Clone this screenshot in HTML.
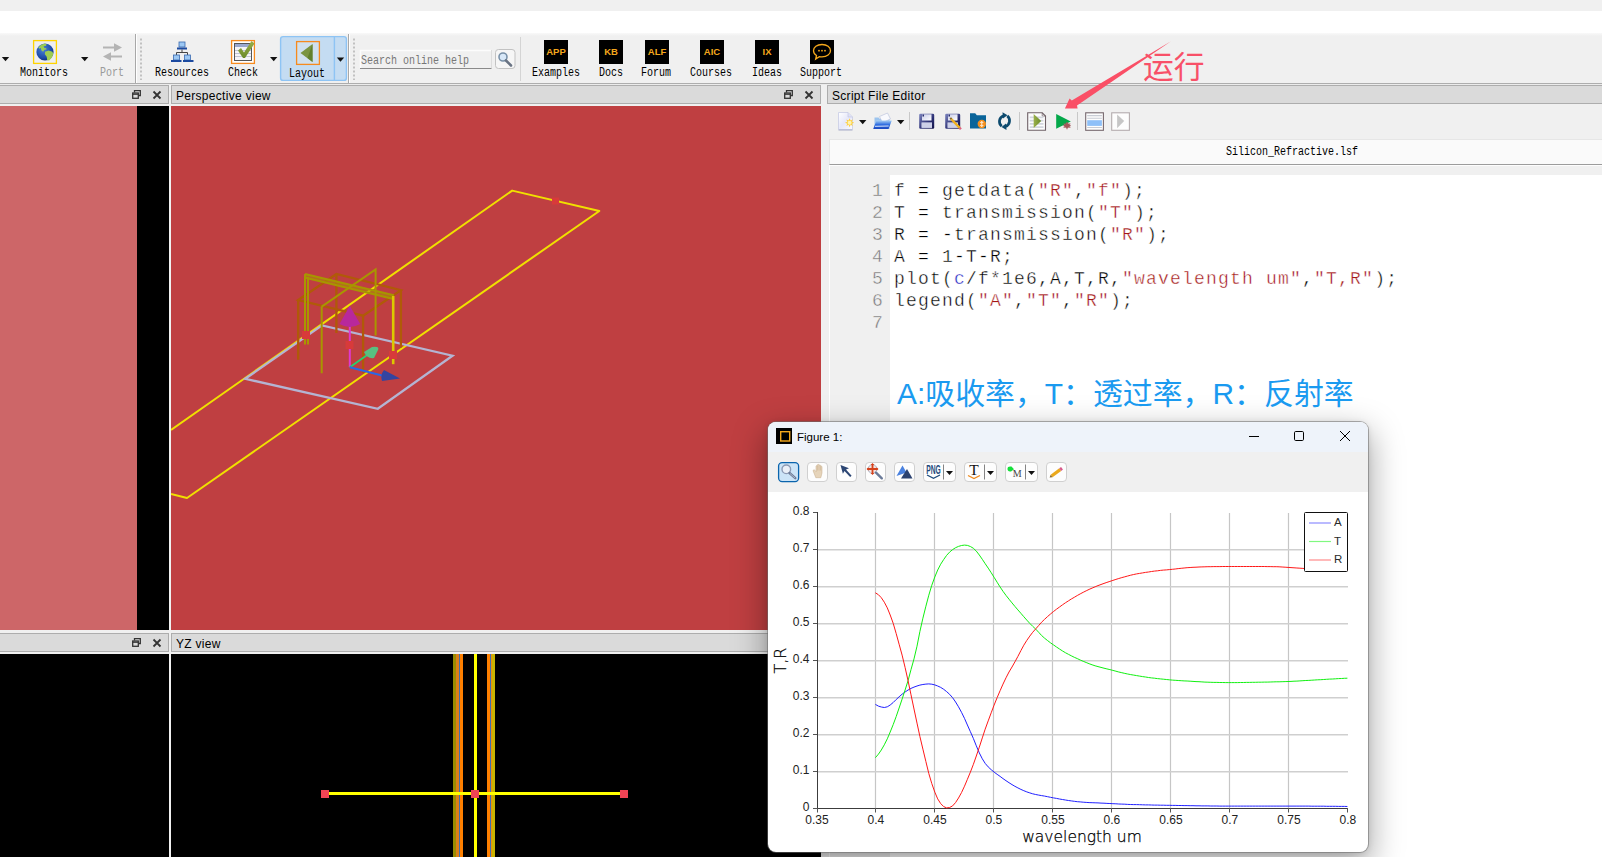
<!DOCTYPE html>
<html><head><meta charset="utf-8"><title>FDTD</title>
<style>
*{box-sizing:border-box;margin:0;padding:0}
html,body{width:1602px;height:857px;overflow:hidden;background:#f0f0f0}
body{position:relative;font-family:"Liberation Sans","Noto Sans CJK SC",sans-serif;font-size:12px;color:#000}
.abs{position:absolute}
.tb{position:absolute;height:19px;background:#dadada;border:1px solid #adadad;font-size:12px;letter-spacing:0.3px;line-height:21px;padding-left:4px;white-space:nowrap;overflow:hidden}
.lbl{position:absolute;font-family:"Liberation Mono",monospace;font-size:12.5px;line-height:14px;white-space:nowrap;text-align:center;transform:scaleX(0.8);transform-origin:50% 50%}
.code{font-family:"Liberation Mono",monospace;font-size:18px;letter-spacing:1.2px;line-height:22px;white-space:pre}
.s{color:#a31515}.k{color:#2020c0}
</style></head><body>
<!-- top strips -->
<div class="abs" style="left:0;top:0;width:1602px;height:11px;background:#f0f0f0"></div>
<div class="abs" style="left:0;top:11px;width:1602px;height:22px;background:#fff"></div>
<div class="abs" id="toolbar" style="left:0;top:33px;width:1602px;height:50px;background:linear-gradient(#f9f9f9,#f0f0f0 3px)"></div>
<div class="abs" style="left:0;top:83px;width:1602px;height:1px;background:#adadad"></div><div class="abs" style="left:0;top:84px;width:1602px;height:1px;background:#ebebeb"></div>
<svg class="abs" style="left:0;top:33px" width="1602" height="51" viewBox="0 33 1602 51">
<defs>
<path id="dd" d="M0 0H7.4L3.7 4.2Z" fill="#111"/>
<radialGradient id="globe" cx="0.4" cy="0.35" r="0.7"><stop offset="0" stop-color="#4a82d8"/><stop offset="0.7" stop-color="#1c4aa8"/><stop offset="1" stop-color="#0c2a70"/></radialGradient>
<linearGradient id="chk" x1="0" y1="0" x2="0" y2="1"><stop offset="0" stop-color="#9ab04a"/><stop offset="1" stop-color="#6a8a2a"/></linearGradient>
</defs>
<!-- separators -->
<rect x="135" y="34" width="1" height="49" fill="#a8a8a8"/><rect x="136" y="34" width="1" height="49" fill="#fff"/>
<rect x="348" y="34" width="1" height="49" fill="#a8a8a8"/><rect x="349" y="34" width="1" height="49" fill="#fff"/>
<rect x="520" y="37" width="1" height="44" fill="#d4d4d4"/>
<path d="M141 38.500V80" stroke="#bcbcbc" stroke-width="1.800" stroke-dasharray="2 2"/>
<path d="M354 38.500V80" stroke="#bcbcbc" stroke-width="1.800" stroke-dasharray="2 2"/>
<!-- dropdown arrows -->
<use href="#dd" x="1.8" y="57"/><use href="#dd" x="81" y="57"/><use href="#dd" x="270" y="57"/>
<!-- Monitors icon -->
<rect x="33.600" y="40.600" width="22.800" height="22.800" fill="#eeeef2" stroke="#ffd400" stroke-width="1.300"/>
<circle cx="45" cy="52" r="8.6" fill="url(#globe)"/>
<path d="M38.300 47.500q2.500-3.300 6.700-4l1.800 1.200-1.200 1.300-2 0.300 0.800 1.600 1.800 0.400 0.300 1.200-2.200 0.300-1.200 2-1.800-1.500-0.500-2.200-1.600 0.600zM45 51.800l3.600-1.300 3.800 1.200 0.900 2-1.300 3.700-2.800 3-2-0.200-0.500-3.400-1.900-2.600z" fill="#9ccc54"/>
<!-- Port icon -->
<g fill="#b4b4b4"><path d="M103 46.5h11v-3.2l8 4.2-8 4.2v-3.2h-11z"/><path d="M122 55.5h-11v-3.2l-8 4.2 8 4.2v-3.2h11z"/></g>
<!-- Resources icon -->
<g><rect x="179" y="42" width="6" height="5" fill="#9cc8f4" stroke="#3a6ab0" stroke-width="0.8"/><rect x="177" y="47.5" width="10" height="2" fill="#1c4aa0"/>
<path d="M182 49.5v3M176.5 57v-4.500h11v4.500" fill="none" stroke="#444" stroke-width="1"/>
<rect x="173.500" y="55" width="6" height="5" fill="#9cc8f4" stroke="#3a6ab0" stroke-width="0.8"/><rect x="171" y="60" width="10.500" height="2" fill="#1c4aa0"/>
<rect x="184.500" y="55" width="6" height="5" fill="#9cc8f4" stroke="#3a6ab0" stroke-width="0.8"/><rect x="183" y="60" width="10.500" height="2" fill="#1c4aa0"/></g>
<!-- Check icon -->
<rect x="231.600" y="40.600" width="22.800" height="22.800" fill="#fff" stroke="#f68a1e" stroke-width="1.3"/>
<rect x="234.500" y="43.500" width="17" height="17" fill="#f4f4f8" stroke="#555" stroke-width="1"/>
<rect x="235" y="44" width="16" height="3" fill="#9aa8d0"/>
<path d="M235 50.500h16M235 53.500h16M235 56.500h16" stroke="#c0c4d4" stroke-width="1"/>
<path d="M238 50.500l3-2.500 3 4.500 7.500-11.500 3 2.500-9.500 14.500-2 0z" fill="url(#chk)"/>
<!-- Layout button -->
<rect x="280.600" y="36.600" width="65.800" height="43.800" rx="2.500" fill="#c4dcf2" stroke="#8ec4f4" stroke-width="1.400"/>
<path d="M334.400 37v43" stroke="#8ec4f4" stroke-width="1.400"/>
<rect x="296.600" y="41.600" width="22.800" height="22.800" fill="#d0e0ee" stroke="#f68a1e" stroke-width="1.3"/>
<path d="M312.500 44v18l-12-9z" fill="#7a9440"/><path d="M312.500 44v18l-5-4z" fill="#62802c"/>
<use href="#dd" x="336.800" y="57.500"/>
<!-- search -->
<rect x="360" y="50" width="131" height="18" fill="#f0f0f0"/><path d="M360.500 68v-17.500h130.500" fill="none" stroke="#fcfcfc" stroke-width="1.400"/><path d="M360 68.500h131.500" fill="none" stroke="#8a8a8a" stroke-width="1"/><path d="M491.500 50v18" stroke="#dcdcdc"/>
<rect x="495.500" y="49.500" width="19.500" height="19" rx="3" fill="#f6f6f6" stroke="#c2c2c2"/>
<circle cx="503" cy="57" r="4" fill="#d8e8f8" stroke="#7890a8" stroke-width="1.600"/><path d="M506 60.500l5 5" stroke="#6a7484" stroke-width="2.600" stroke-linecap="round"/>
<!-- black icons -->
<g fill="#000"><rect x="544" y="40" width="24" height="24"/><rect x="599" y="40" width="24" height="24"/><rect x="645" y="40" width="24" height="24"/><rect x="700" y="40" width="24" height="24"/><rect x="755" y="40" width="24" height="24"/><rect x="810" y="40" width="24" height="24"/></g>
<g font-family="Liberation Sans, sans-serif" font-weight="bold" font-size="9.500" fill="#f5a81c" text-anchor="middle">
<text x="556" y="55.300">APP</text><text x="611" y="55.300">KB</text><text x="657" y="55.300">ALF</text><text x="712" y="55.300">AIC</text><text x="767" y="55.300">IX</text></g>
<path d="M822 44.500c-5 0-8.500 2.800-8.500 6.200 0 2 1.200 3.700 3 4.800l-0.800 3.500 3.600-2.400c0.900 0.200 1.800 0.300 2.700 0.300 5 0 8.500-2.800 8.500-6.200s-3.500-6.200-8.500-6.200z" fill="none" stroke="#f5a81c" stroke-width="1.300"/>
<g fill="#f5a81c"><circle cx="819" cy="50.700" r="0.900"/><circle cx="822" cy="50.700" r="0.900"/><circle cx="825" cy="50.700" r="0.900"/></g>
</svg>
<div class="lbl" style="left:4px;top:66px;width:80px">Monitors</div>
<div class="lbl" style="left:72px;top:66px;width:80px;color:#9a9a9a">Port</div>
<div class="lbl" style="left:142px;top:66px;width:80px">Resources</div>
<div class="lbl" style="left:203px;top:66px;width:80px">Check</div>
<div class="lbl" style="left:267px;top:67px;width:80px">Layout</div>
<div class="lbl" style="left:361px;top:54px;color:#777;text-align:left;transform-origin:0 50%">Search online help</div>
<div class="lbl" style="left:516px;top:66px;width:80px">Examples</div>
<div class="lbl" style="left:571px;top:66px;width:80px">Docs</div>
<div class="lbl" style="left:616px;top:66px;width:80px">Forum</div>
<div class="lbl" style="left:671px;top:66px;width:80px">Courses</div>
<div class="lbl" style="left:727px;top:66px;width:80px">Ideas</div>
<div class="lbl" style="left:781px;top:66px;width:80px">Support</div>
<!-- dock title bars row 1 -->
<div class="tb" style="left:-2px;top:85px;width:171px"></div>
<div class="tb" style="left:171px;top:85px;width:650px">Perspective view</div>
<div class="tb" style="left:827px;top:85px;width:790px">Script File Editor</div>
<!-- row 1 contents -->
<div class="abs" style="left:0;top:106px;width:137px;height:524px;background:#cd6668"></div>
<div class="abs" style="left:137px;top:106px;width:32px;height:524px;background:#000"></div>
<div class="abs" style="left:171px;top:106px;width:650px;height:524px;background:#bf3f41"></div>
<!-- dock title bars row 2 -->
<div class="tb" style="left:-2px;top:633px;width:171px"></div>
<div class="tb" style="left:171px;top:633px;width:650px">YZ view</div>
<!-- row 2 contents -->
<div class="abs" style="left:0;top:654px;width:169px;height:203px;background:#000"></div>
<div class="abs" style="left:171px;top:654px;width:650px;height:203px;background:#000"></div>
<!-- float/close glyphs -->
<svg class="abs" style="left:0;top:0" width="1602" height="857" viewBox="0 0 1602 857">
<defs>
<g id="fc" fill="none" stroke="#333" stroke-width="1.3">
<path d="M2.5 2.5V0.7H8.3V5.5H6.5" /><rect x="0.7" y="3" width="5.6" height="5.3"/><path d="M0.7 4.2H6.3" />
<path d="M21.5 1.5L28.5 8.5M28.5 1.5L21.5 8.5" stroke-width="1.8"/>
</g></defs>
<use href="#fc" x="132" y="90"/><use href="#fc" x="784" y="90"/>
<use href="#fc" x="132" y="638"/>
</svg>
<svg class="abs" style="left:171px;top:106px" width="650" height="524" viewBox="171 106 650 524">
<!-- long yellow rectangle -->
<g fill="none" stroke="#f0e000" stroke-width="2" stroke-linejoin="round">
<path d="M171 430L512.2 190.6L599.3 211L187 498L171 494"/>
</g>
<!-- lavender rectangle -->
<path d="M245.2 378.8L322 325.4L452.5 355.7L377.8 408.8Z" fill="none" stroke="#b4b4d2" stroke-width="2.3"/>
<!-- brown box -->
<g fill="none" stroke="#b05a08" stroke-width="2.3">
<path d="M298.2 300L336.4 274L400.9 290.2L363.1 315.7Z"/>
<path d="M298.2 300V359.7M336.4 274V333.1M400.9 290.2V347.5M363.1 315.7V373.3"/>
</g>
<!-- olive frame -->
<g fill="none" stroke="#a89600" stroke-width="2">
<path d="M305 274L393.8 295.2M305.5 277.8L393.5 299M305 274V344.5M308 277V344.5"/><path d="M305 274L393.8 295.2V299L305 277.8Z" fill="#a89600" fill-opacity="0.55" stroke="none"/>
<path d="M321.7 306.6L375.6 269.4V335.4M321.7 306.6V373.3"/>
</g>
<path d="M393.2 296V364.2" stroke="#dcc800" stroke-width="2.6" fill="none"/>
<!-- gizmo -->
<path d="M349.8 367.2V325" stroke="#e038d0" stroke-width="2"/>
<path d="M349.8 305.8L339.5 324Q349.8 330 360.2 324Z" fill="#b8289c"/>
<path d="M349.8 367.2L370 353" stroke="#28d070" stroke-width="1.8"/>
<path d="M364 352L372 347Q380 346 378 350L374 358Q367 359 364 352Z" fill="#58c080"/>
<path d="M349.8 367.2L384 376" stroke="#2868e8" stroke-width="2"/>
<path d="M384 370L400 378.5L382 381Q380 375 384 370Z" fill="#3444a0"/>
<!-- red markers -->
<g fill="#d83a3a"><rect x="302" y="331" width="8" height="8"/><rect x="345.5" y="341" width="8" height="8"/><rect x="389" y="351" width="8" height="8"/><rect x="552" y="197.5" width="7" height="7"/></g>
</svg>
<svg class="abs" style="left:171px;top:654px" width="650" height="203" viewBox="171 654 650 203" shape-rendering="crispEdges">
<rect x="453" y="654" width="3" height="203" fill="#9a8c00"/>
<rect x="456" y="654" width="3" height="203" fill="#dc8018"/>
<rect x="459" y="654" width="1" height="203" fill="#4070b0"/>
<rect x="460" y="654" width="3" height="203" fill="#ff8000"/>
<rect x="487" y="654" width="3" height="203" fill="#ff8000"/>
<rect x="490" y="654" width="1" height="203" fill="#4070b0"/>
<rect x="491" y="654" width="1" height="203" fill="#e89010"/>
<rect x="492" y="654" width="3" height="203" fill="#c8b400"/>
<rect x="474" y="654" width="3" height="203" fill="#ffff00"/>
<rect x="325" y="792" width="300" height="3" fill="#ffff00"/>
<g fill="#f04454"><rect x="321" y="790" width="8" height="8"/><rect x="471" y="790" width="8" height="8"/><rect x="620" y="790" width="8" height="8"/></g>
</svg>
<!-- script editor -->
<div class="abs" style="left:829px;top:139px;width:780px;height:26px;background:#fafafa;border-bottom:1px solid #9c9c9c;border-top:1px solid #e6e6e6;border-left:1px solid #e6e6e6"></div><div class="abs" style="left:829px;top:165px;width:780px;height:1px;background:#fdfdfd"></div>
<div class="lbl" style="left:1192px;top:145px;width:200px">Silicon_Refractive.lsf</div>
<div class="abs" style="left:829px;top:165px;width:1px;height:692px;background:#fff"></div>
<div class="abs" style="left:890px;top:175px;width:712px;height:682px;background:#fff"></div>
<div class="abs code" style="left:830px;top:180px;width:54px;text-align:right;color:#787878;-webkit-text-stroke:0.4px #f0f0f0">1
2
3
4
5
6
7</div>
<div class="abs code" style="left:894px;top:180px;-webkit-text-stroke:0.4px #fff">f = getdata(<span class="s">"R"</span>,<span class="s">"f"</span>);
T = transmission(<span class="s">"T"</span>);
R = -transmission(<span class="s">"R"</span>);
A = 1-T-R;
plot(<span class="k">c</span>/f*1e6,A,T,R,<span class="s">"wavelength um"</span>,<span class="s">"T,R"</span>);
legend(<span class="s">"A"</span>,<span class="s">"T"</span>,<span class="s">"R"</span>);
</div>
<svg class="abs" style="left:826px;top:104px" width="320" height="36" viewBox="826 104 320 36">
<defs>
<path id="dd2" d="M0 0H7.400L3.700 4.200Z" fill="#111"/>
<linearGradient id="flop" x1="0" y1="0" x2="1" y2="1"><stop offset="0" stop-color="#7e86c0"/><stop offset="0.6" stop-color="#2a2e72"/><stop offset="1" stop-color="#121248"/></linearGradient>
<linearGradient id="fold" x1="0" y1="0" x2="0" y2="1"><stop offset="0" stop-color="#a8d0f4"/><stop offset="0.500" stop-color="#2a6ae0"/><stop offset="1" stop-color="#1a48c0"/></linearGradient>
<linearGradient id="tri" x1="0" y1="0" x2="1" y2="0"><stop offset="0" stop-color="#9ab04a"/><stop offset="1" stop-color="#6a8a2a"/></linearGradient>
<linearGradient id="pg" x1="0" y1="0" x2="1" y2="1"><stop offset="0" stop-color="#ffffff"/><stop offset="0.500" stop-color="#e6e8fa"/><stop offset="1" stop-color="#fafaff"/></linearGradient><linearGradient id="lab" x1="0" y1="0" x2="1" y2="1"><stop offset="0" stop-color="#c8cce8"/><stop offset="1" stop-color="#ffffff"/></linearGradient>
</defs>
<!-- new doc -->
<path d="M838.500 112.500h9.500l4.500 4.500v12.500h-14z" fill="url(#pg)" stroke="#c8cce4" stroke-width="0.800"/><path d="M848 112.500v4.500h4.500" fill="#e0e2f4" stroke="#c0c4e0" stroke-width="0.600"/><path d="M838.500 130h14" stroke="#a8acc8" stroke-width="1"/>
<path d="M849.600 118.200l1 2.400 2.300-1.200-1.100 2.300 2.400 1-2.400 1 1.100 2.300-2.300-1.200-1 2.400-1-2.400-2.300 1.200 1.100-2.300-2.400-1 2.400-1-1.100-2.300 2.300 1.200z" fill="#ffcf3a"/><circle cx="849.600" cy="122.700" r="2" fill="#fff3b0"/>
<use href="#dd2" x="859" y="120"/>
<!-- open folder -->
<path d="M874.500 117.500h4l1.500 1.500h9.500v10h-15z" fill="#9cc4ee"/><path d="M879.500 116.500l8-3.500 3 6-8 3.500z" fill="#f8f9fd" stroke="#b4bcd8" stroke-width="0.600"/>
<path d="M873.200 129l3.300-8.500h15.300l-3.300 8.500z" fill="url(#fold)"/><path d="M875 126.300l13.700-0.300" stroke="#dfeafc" stroke-width="1"/>
<use href="#dd2" x="897" y="120"/>
<rect x="909" y="112" width="1" height="18" fill="#c8c8c8"/>
<!-- save -->
<g id="flp"><rect x="919.200" y="113.700" width="15" height="15" rx="1.300" fill="url(#flop)"/><rect x="922" y="114.300" width="9.500" height="6.200" fill="url(#lab)"/><rect x="921.500" y="122.300" width="10.500" height="5.800" fill="#c0c4e0"/><path d="M921.500 124h10.500M921.500 126h10.500" stroke="#e4e6f4" stroke-width="0.700"/><rect x="922.500" y="114.500" width="1.500" height="2" fill="#2a3070"/></g>
<!-- save as -->
<use href="#flp" x="26" y="0"/>
<path d="M951.500 119.200l8.200 8.700" stroke="#efb020" stroke-width="2.400" stroke-linecap="butt"/><path d="M950.300 117.900l1.200 1.300" stroke="#8a6a20" stroke-width="2" /><path d="M959.700 127.900l1.200 1.300" stroke="#e06080" stroke-width="2.400"/>
<!-- blue folder -->
<path d="M970 113.200h5.200l1.600 2h9.200v13.300h-16z" fill="#0a649a"/><circle cx="981.800" cy="124" r="4.200" fill="#f5901e"/><path d="M981.800 121.500v5M980.300 123l1.500-1.500 1.500 1.500M980.300 125l1.500 1.500 1.500-1.500" stroke="#fff" stroke-width="0.900" fill="none"/>
<!-- refresh -->
<path d="M1001.700 126.300a6.200 6.200 0 0 1 1.800-10.600" fill="none" stroke="#0c4a6e" stroke-width="2.700"/><path d="M1007.300 115.900a6.200 6.200 0 0 1-1.800 10.600" fill="none" stroke="#0c4a6e" stroke-width="2.700"/>
<path d="M1002.500 112.300l5 3-4.500 3.300z" fill="#0c4a6e"/><path d="M1006.500 129.900l-5-3 4.500-3.300z" fill="#0c4a6e"/>
<rect x="1019" y="112" width="1" height="18" fill="#c8c8c8"/>
<!-- run script doc -->
<path d="M1027.700 112.800h14.500l3.300 3.300v14.200h-17.800z" fill="#fdfdfd" stroke="#6e6066" stroke-width="1.100"/><path d="M1042.200 112.800v3.300h3.300" fill="none" stroke="#6e6066" stroke-width="0.700"/>
<path d="M1029.700 117.400h13.800M1029.700 120.600h13.800M1029.700 123.900h13.800M1029.700 127.100h13.800" stroke="#d2d6de" stroke-width="1.700"/>
<path d="M1033.700 114.100l7.500 6.900-7.500 6.900z" fill="url(#tri)"/>
<!-- run green -->
<path d="M1056.200 114.100l14.600 7.300-14.600 7.300z" fill="#04a84a"/><circle cx="1067" cy="125.600" r="2.500" fill="#a25a5c"/><path d="M1063.700 123.600l6.600 4M1070.300 123.600l-6.600 4M1067 121.900v7.400M1063.400 125.600h7.200" stroke="#a25a5c" stroke-width="1.100"/>
<rect x="1077" y="112" width="1" height="18" fill="#c8c8c8"/>
<!-- lines -->
<rect x="1085.700" y="112.800" width="17.700" height="17.500" fill="#fdfdfd" stroke="#76686e" stroke-width="1.100"/><path d="M1087.200 115.600h14.700M1087.200 118.300h14.700M1087.200 127.500h14.700" stroke="#c8ccd4" stroke-width="1.100"/><rect x="1087.200" y="120.200" width="14.700" height="5.700" fill="#8ec0f8"/>
<!-- gray play -->
<rect x="1111.700" y="112.800" width="17.700" height="17.500" fill="#fdfdfd" stroke="#b4acae" stroke-width="1.100"/><path d="M1117.100 114.500l7.100 6.500-7.100 7.300z" fill="#c6c6c6"/>
</svg>

<!-- figure window -->
<div class="abs" style="left:768px;top:422px;width:600px;height:430px;border-radius:8px;background:#fff;box-shadow:0 0 0 1px rgba(110,110,110,0.55),0 12px 32px 3px rgba(0,0,0,0.34),0 1px 6px rgba(0,0,0,0.12);overflow:hidden">
<div class="abs" style="left:0;top:0;width:600px;height:30px;background:#eef3fa"></div>
<div class="abs" style="left:0;top:30px;width:600px;height:40px;background:#f0f0f0"></div>
<div class="abs" style="left:29px;top:7.5px;font-size:11.5px;line-height:14px;white-space:nowrap">Figure 1:</div>
</div>
<svg class="abs" style="left:768px;top:421px" width="600" height="431" viewBox="768 421 600 431">
<defs><path id="dd3" d="M0 0H7L3.500 4Z" fill="#111"/></defs>
<!-- title icon -->
<rect x="776" y="428" width="16" height="16" fill="#000"/><rect x="780.700" y="431.700" width="9" height="9.300" fill="none" stroke="#f5a81c" stroke-width="1.400"/>
<!-- window controls -->
<path d="M1249 436.500h10" stroke="#000" stroke-width="1"/>
<rect x="1294.500" y="431.500" width="9" height="9" rx="1.200" fill="none" stroke="#000" stroke-width="1"/>
<path d="M1340 431l10 10M1350 431l-10 10" stroke="#000" stroke-width="1"/>
<!-- toolbar buttons -->
<g fill="#fdfdfd" stroke="#d0d0d0">
<rect x="807.500" y="462.500" width="20" height="19" rx="3.500"/><rect x="836.500" y="462.500" width="20" height="19" rx="3.500"/><rect x="865.500" y="462.500" width="20" height="19" rx="3.500"/><rect x="894.500" y="462.500" width="20" height="19" rx="3.500"/>
<rect x="923.500" y="462.500" width="32" height="19" rx="3.500"/><rect x="964.500" y="462.500" width="32" height="19" rx="3.500"/><rect x="1005.500" y="462.500" width="32" height="19" rx="3.500"/><rect x="1046.500" y="462.500" width="20" height="19" rx="3.500"/>
</g>
<rect x="778.600" y="462.600" width="20" height="19" rx="3.500" fill="#cce4f7" stroke="#0a64ad" stroke-width="1.300"/>
<!-- magnifier -->
<circle cx="786.300" cy="469.300" r="4.300" fill="#eaf0f8" stroke="#8c9ab4" stroke-width="1.400"/><path d="M789.500 473l5.800 5.200" stroke="#6e7c98" stroke-width="2.400" stroke-linecap="round"/><path d="M790 473.500l5 4.500" stroke="#c4ccdc" stroke-width="0.700"/>
<!-- hand -->
<path d="M813 470.500l1.300-0.800 1.700 2v-5.700q0.700-0.900 1.400 0v-1.300q0.800-0.900 1.600 0v0.600q0.800-0.800 1.600 0v1.200q0.700-0.700 1.400 0v6.500l-1.200 4.700h-5z" fill="#e6d4ba" stroke="#c4aa88" stroke-width="0.500"/>
<path d="M817.400 466v4.500M819 465.500v5M820.600 466.500v4" stroke="#c4aa88" stroke-width="0.500" fill="none"/>
<!-- arrow cursor -->
<path d="M840.500 465l8.500 3.200-3 1.300 5.600 6.200-1.500 1.400-5.600-6.200-1.600 2.900z" fill="#2c4674"/>
<!-- zoom target -->
<circle cx="872.500" cy="469" r="4.400" fill="#f4e4e0" stroke="#98a4bc" stroke-width="0.800"/><path d="M872.500 464v10M867.500 469h10" stroke="#d6421c" stroke-width="1.800"/><path d="M872.500 463l1.800 2h-3.600zM872.500 475l1.800-2h-3.600zM866.500 469l2-1.800v3.600zM878.500 469l-2-1.800v3.600z" fill="#d6421c"/><path d="M876 472.700l5.800 5.600" stroke="#6a7a98" stroke-width="2.400" stroke-linecap="round"/>
<!-- mountains -->
<path d="M896.500 476l6-10.500 4 7z" fill="#4a82e0"/><path d="M901 478.500l6-9.500 5.500 9.500z" fill="#2c4270"/>
<!-- PNG -->
<text x="926.300" y="474" font-family="Liberation Sans, sans-serif" font-size="12.500" font-weight="bold" fill="#1c4a7c" textLength="14.500" lengthAdjust="spacingAndGlyphs">PNG</text>
<path d="M927 475l6.500 3.300 6.500-3.300" fill="none" stroke="#1c4a7c" stroke-width="1.300"/>
<path d="M943.500 464.500v15" stroke="#666" stroke-width="0.800"/><use href="#dd3" x="946" y="471"/>
<!-- T -->
<text x="974" y="475" font-family="Liberation Serif, serif" font-size="15.500" fill="#111" text-anchor="middle">T</text>
<path d="M968 475.500l6 3 6-3" fill="none" stroke="#f08a1c" stroke-width="1.300"/>
<path d="M984.500 464.500v15" stroke="#666" stroke-width="0.800"/><use href="#dd3" x="987" y="471"/>
<!-- M -->
<path d="M1007.500 468.800q0-2.300 2.700-2.300h1.300l2.500 2.700-3 2.300h-1q-2.500 0-2.500-2.700z" fill="#14e03a"/>
<text x="1012.700" y="476.600" font-family="Liberation Serif, serif" font-size="10" fill="#444">M</text>
<path d="M1025.500 464.500v15" stroke="#666" stroke-width="0.800"/><use href="#dd3" x="1028" y="471"/>
<!-- pencil -->
<path d="M1051.600 476l8.600-6.400" stroke="#eba91c" stroke-width="3.200" stroke-linecap="butt"/><path d="M1060.200 469.600l1.800-1.350" stroke="#d8588a" stroke-width="3.200"/><path d="M1049.600 477.500l1.100-2.700 1.900 2.500z" fill="#8a6a30"/>
<!-- plot -->
<path d="M875.5 513V808M934.5 513V808M993.5 513V808M1052.5 513V808M1111.5 513V808M1170.5 513V808M1229.5 513V808M1288.5 513V808" stroke="#c6c6c6" stroke-width="1.2" fill="none"/><path d="M818 771.75H1348M818 734.75H1348M818 697.75H1348M818 660.75H1348M818 623.75H1348M818 586.75H1348M818 549.75H1348" stroke="#cfcfcf" stroke-width="1.6" fill="none"/>
<path d="M817.500 512V808.500H1348" fill="none" stroke="#3c3c3c" stroke-width="1"/>
<path d="M817.5 808V812.5M875.5 808V812.5M934.5 808V812.5M993.5 808V812.5M1052.5 808V812.5M1111.5 808V812.5M1170.5 808V812.5M1229.5 808V812.5M1288.5 808V812.5M1347.5 808V812.5M813 808.5H817M813 771.5H817M813 734.5H817M813 697.5H817M813 660.5H817M813 623.5H817M813 586.5H817M813 549.5H817M813 512.5H817" stroke="#555" stroke-width="1" fill="none"/>
<path d="M875.4 704.4L878.4 706.1L881.3 707.0L884.3 707.5L887.3 706.8L890.2 705.0L893.2 702.5L896.2 699.5L899.1 696.8L902.1 694.2L905.1 692.0L908.1 690.0L911.0 688.4L914.0 687.1L917.0 686.0L919.9 685.1L922.9 684.5L925.9 684.1L928.8 683.9L931.8 684.2L934.8 684.9L937.7 686.0L940.7 687.4L943.7 689.3L946.6 691.6L949.6 694.3L952.6 697.7L955.6 702.0L958.5 706.8L961.5 712.3L964.5 718.4L967.4 725.0L970.4 731.7L973.4 738.5L976.3 745.8L979.3 752.9L982.3 758.8L985.2 763.4L988.2 766.9L991.2 769.7L994.1 772.1L997.1 774.3L1000.1 776.4L1003.0 778.6L1006.0 780.7L1009.0 782.7L1012.0 784.6L1014.9 786.3L1017.9 787.9L1020.9 789.4L1023.8 790.7L1026.8 791.9L1029.8 792.9L1032.7 793.8L1035.7 794.5L1038.7 795.1L1041.6 795.6L1044.6 796.1L1047.6 796.7L1050.5 797.3L1053.5 797.9L1056.5 798.4L1059.5 799.0L1062.4 799.5L1065.4 800.0L1068.4 800.5L1071.3 800.9L1074.3 801.3L1077.3 801.7L1080.2 801.9L1083.2 802.2L1086.2 802.4L1089.1 802.6L1092.1 802.7L1095.1 802.8L1098.0 802.9L1101.0 803.1L1104.0 803.2L1106.9 803.4L1109.9 803.5L1112.9 803.7L1115.9 803.8L1118.8 804.0L1121.8 804.1L1124.8 804.2L1127.7 804.4L1130.7 804.5L1133.7 804.6L1136.6 804.6L1139.6 804.7L1142.6 804.8L1145.5 804.9L1148.5 804.9L1151.5 805.0L1154.4 805.1L1157.4 805.1L1160.4 805.2L1163.3 805.2L1166.3 805.3L1169.3 805.3L1172.3 805.4L1175.2 805.4L1178.2 805.5L1181.2 805.5L1184.1 805.6L1187.1 805.6L1190.1 805.7L1193.0 805.7L1196.0 805.8L1199.0 805.8L1201.9 805.9L1204.9 805.9L1207.9 805.9L1210.8 806.0L1213.8 806.0L1216.8 806.0L1219.8 806.1L1222.7 806.1L1225.7 806.1L1228.7 806.1L1231.6 806.1L1234.6 806.1L1237.6 806.1L1240.5 806.1L1243.5 806.1L1246.5 806.1L1249.4 806.1L1252.4 806.1L1255.4 806.1L1258.3 806.1L1261.3 806.1L1264.3 806.1L1267.2 806.1L1270.2 806.1L1273.2 806.1L1276.2 806.1L1279.1 806.1L1282.1 806.1L1285.1 806.1L1288.0 806.1L1291.0 806.1L1294.0 806.1L1296.9 806.1L1299.9 806.1L1302.9 806.1L1305.8 806.1L1308.8 806.1L1311.8 806.2L1314.7 806.2L1317.7 806.2L1320.7 806.2L1323.7 806.2L1326.6 806.3L1329.6 806.3L1332.6 806.3L1335.5 806.3L1338.5 806.4L1341.5 806.4L1344.4 806.4L1347.4 806.5" fill="none" stroke="#2020ff" stroke-width="1"/>
<path d="M875.4 757.7L878.4 754.2L881.3 750.0L884.3 744.8L887.3 738.8L890.2 732.0L893.2 724.6L896.2 716.5L899.1 708.0L902.1 699.1L905.1 690.0L908.1 680.5L911.0 669.6L914.0 658.9L917.0 646.2L919.9 631.5L922.9 618.2L925.9 606.2L928.8 595.2L931.8 585.2L934.8 577.0L937.7 570.0L940.7 564.2L943.7 559.5L946.6 555.4L949.6 552.1L952.6 549.6L955.6 547.7L958.5 546.4L961.5 545.5L964.5 545.1L967.4 545.4L970.4 546.5L973.4 548.3L976.3 551.1L979.3 555.0L982.3 559.3L985.2 563.7L988.2 568.1L991.2 572.7L994.1 577.3L997.1 582.2L1000.1 587.0L1003.0 591.3L1006.0 595.4L1009.0 599.2L1012.0 602.9L1014.9 606.4L1017.9 609.9L1020.9 613.3L1023.8 616.7L1026.8 620.1L1029.8 623.4L1032.7 626.3L1035.7 629.1L1038.7 632.3L1041.6 635.5L1044.6 638.2L1047.6 640.6L1050.5 642.8L1053.5 644.9L1056.5 647.0L1059.5 649.0L1062.4 650.9L1065.4 652.7L1068.4 654.3L1071.3 655.8L1074.3 657.3L1077.3 658.6L1080.2 660.0L1083.2 661.3L1086.2 662.5L1089.1 663.7L1092.1 664.8L1095.1 665.8L1098.0 666.6L1101.0 667.4L1104.0 668.2L1106.9 668.9L1109.9 669.6L1112.9 670.4L1115.9 671.2L1118.8 672.0L1121.8 672.7L1124.8 673.4L1127.7 674.0L1130.7 674.6L1133.7 675.1L1136.6 675.6L1139.6 676.1L1142.6 676.6L1145.5 677.0L1148.5 677.5L1151.5 677.9L1154.4 678.2L1157.4 678.6L1160.4 678.9L1163.3 679.2L1166.3 679.5L1169.3 679.8L1172.3 680.1L1175.2 680.3L1178.2 680.5L1181.2 680.7L1184.1 680.9L1187.1 681.0L1190.1 681.2L1193.0 681.4L1196.0 681.6L1199.0 681.7L1201.9 681.9L1204.9 682.1L1207.9 682.2L1210.8 682.3L1213.8 682.4L1216.8 682.4L1219.8 682.5L1222.7 682.5L1225.7 682.6L1228.7 682.6L1231.6 682.6L1234.6 682.6L1237.6 682.6L1240.5 682.5L1243.5 682.5L1246.5 682.4L1249.4 682.4L1252.4 682.3L1255.4 682.3L1258.3 682.2L1261.3 682.2L1264.3 682.1L1267.2 682.1L1270.2 682.0L1273.2 681.9L1276.2 681.8L1279.1 681.8L1282.1 681.7L1285.1 681.6L1288.0 681.5L1291.0 681.4L1294.0 681.2L1296.9 681.1L1299.9 680.9L1302.9 680.7L1305.8 680.5L1308.8 680.4L1311.8 680.2L1314.7 680.0L1317.7 679.8L1320.7 679.7L1323.7 679.5L1326.6 679.3L1329.6 679.1L1332.6 679.0L1335.5 678.8L1338.5 678.6L1341.5 678.5L1344.4 678.3L1347.4 678.2" fill="none" stroke="#10f010" stroke-width="1"/>
<path d="M875.4 592.8L878.4 594.7L881.3 597.7L884.3 602.2L887.3 607.9L890.2 615.0L893.2 623.3L896.2 633.6L899.1 644.2L902.1 655.1L905.1 667.5L908.1 680.9L911.0 694.8L914.0 709.0L917.0 723.1L919.9 736.5L922.9 749.1L925.9 761.6L928.8 773.5L931.8 783.6L934.8 792.1L937.7 798.9L940.7 803.6L943.7 806.6L946.6 807.9L949.6 807.5L952.6 805.9L955.6 802.5L958.5 798.0L961.5 792.6L964.5 786.2L967.4 779.3L970.4 772.1L973.4 764.3L976.3 756.0L979.3 747.2L982.3 737.9L985.2 729.1L988.2 720.9L991.2 712.8L994.1 705.1L997.1 697.7L1000.1 690.7L1003.0 684.1L1006.0 677.8L1009.0 672.0L1012.0 667.0L1014.9 661.9L1017.9 656.4L1020.9 650.6L1023.8 645.2L1026.8 640.4L1029.8 636.1L1032.7 632.3L1035.7 628.9L1038.7 625.5L1041.6 622.2L1044.6 619.3L1047.6 616.5L1050.5 614.0L1053.5 611.5L1056.5 609.2L1059.5 607.0L1062.4 604.9L1065.4 602.8L1068.4 600.9L1071.3 599.0L1074.3 597.3L1077.3 595.5L1080.2 593.9L1083.2 592.3L1086.2 590.8L1089.1 589.4L1092.1 588.1L1095.1 586.8L1098.0 585.6L1101.0 584.5L1104.0 583.4L1106.9 582.4L1109.9 581.4L1112.9 580.4L1115.9 579.4L1118.8 578.5L1121.8 577.6L1124.8 576.8L1127.7 576.0L1130.7 575.2L1133.7 574.5L1136.6 573.9L1139.6 573.4L1142.6 572.9L1145.5 572.4L1148.5 572.0L1151.5 571.5L1154.4 571.1L1157.4 570.8L1160.4 570.4L1163.3 570.1L1166.3 569.9L1169.3 569.6L1172.3 569.3L1175.2 569.0L1178.2 568.6L1181.2 568.3L1184.1 568.0L1187.1 567.7L1190.1 567.5L1193.0 567.3L1196.0 567.2L1199.0 567.0L1201.9 566.9L1204.9 566.8L1207.9 566.7L1210.8 566.7L1213.8 566.6L1216.8 566.6L1219.8 566.6L1222.7 566.5L1225.7 566.5L1228.7 566.5L1231.6 566.5L1234.6 566.5L1237.6 566.5L1240.5 566.5L1243.5 566.5L1246.5 566.5L1249.4 566.5L1252.4 566.5L1255.4 566.5L1258.3 566.5L1261.3 566.5L1264.3 566.5L1267.2 566.6L1270.2 566.6L1273.2 566.7L1276.2 566.7L1279.1 566.8L1282.1 567.0L1285.1 567.2L1288.0 567.4L1291.0 567.6L1294.0 567.8L1296.9 568.0L1299.9 568.2L1302.9 568.4L1305.8 568.6L1308.8 568.7L1311.8 568.9L1314.7 569.0L1317.7 569.2L1320.7 569.3L1323.7 569.5L1326.6 569.6L1329.6 569.8L1332.6 569.9L1335.5 570.0L1338.5 570.2L1341.5 570.3L1344.4 570.4L1347.4 570.6" fill="none" stroke="#ff1818" stroke-width="1"/>
<g font-family="Liberation Sans, sans-serif" font-size="12" fill="#222">
<text x="816.9" y="823.8" text-anchor="middle">0.35</text>
<text x="875.9" y="823.8" text-anchor="middle">0.4</text>
<text x="934.9" y="823.8" text-anchor="middle">0.45</text>
<text x="993.9" y="823.8" text-anchor="middle">0.5</text>
<text x="1052.9" y="823.8" text-anchor="middle">0.55</text>
<text x="1111.9" y="823.8" text-anchor="middle">0.6</text>
<text x="1170.9" y="823.8" text-anchor="middle">0.65</text>
<text x="1229.9" y="823.8" text-anchor="middle">0.7</text>
<text x="1288.9" y="823.8" text-anchor="middle">0.75</text>
<text x="1347.9" y="823.8" text-anchor="middle">0.8</text>
<text x="809.5" y="810.7" text-anchor="end">0</text>
<text x="809.5" y="773.7" text-anchor="end">0.1</text>
<text x="809.5" y="736.8" text-anchor="end">0.2</text>
<text x="809.5" y="699.8" text-anchor="end">0.3</text>
<text x="809.5" y="662.8" text-anchor="end">0.4</text>
<text x="809.5" y="625.8" text-anchor="end">0.5</text>
<text x="809.5" y="588.9" text-anchor="end">0.6</text>
<text x="809.5" y="551.9" text-anchor="end">0.7</text>
<text x="809.5" y="514.9" text-anchor="end">0.8</text>
</g>
<text x="1082" y="841.8" font-family="DejaVu Sans, Liberation Sans, sans-serif" font-weight="200" font-size="15.5" fill="#000" stroke="#000" stroke-width="0.250" text-anchor="middle">wavelength um</text>
<text transform="translate(786,660.500) rotate(-90)" font-family="DejaVu Sans, Liberation Sans, sans-serif" font-weight="200" font-size="16" fill="#000" stroke="#000" stroke-width="0.250" text-anchor="middle">T,R</text>
<!-- legend -->
<rect x="1304.500" y="512.500" width="43" height="59" rx="1" fill="#fff" stroke="#111" stroke-width="1"/>
<path d="M1309 523h22" stroke="#8c8cff" stroke-width="1.200"/><path d="M1309 541.500h22" stroke="#80f880" stroke-width="1.200"/><path d="M1309 560h22" stroke="#ff8a8a" stroke-width="1.200"/>
<g font-family="Liberation Sans, sans-serif" font-size="11.500" fill="#2a2a2a"><text x="1334" y="526.300">A</text><text x="1334" y="544.800">T</text><text x="1334" y="563.300">R</text></g>
</svg>

<div class="abs" style="left:897px;top:373px;font-size:29.9px;line-height:42px;color:#1a9af0;white-space:nowrap;font-family:'Liberation Sans','Noto Sans CJK SC',sans-serif">A:吸收率，T：透过率，R：反射率</div>
<div class="abs" style="left:1143px;top:48px;font-size:30.8px;line-height:40px;color:#f85068;white-space:nowrap;font-family:'Liberation Sans','Noto Sans CJK SC',sans-serif">运行</div>
<svg class="abs" style="left:1050px;top:36px" width="130" height="80" viewBox="1050 36 130 80">
<path d="M1171 41.200L1071.800 100.600L1069.600 98.500L1064.900 108.600L1077.600 108.600L1077 105.400Z" fill="#fa4f66"/>
</svg>

</body></html>
